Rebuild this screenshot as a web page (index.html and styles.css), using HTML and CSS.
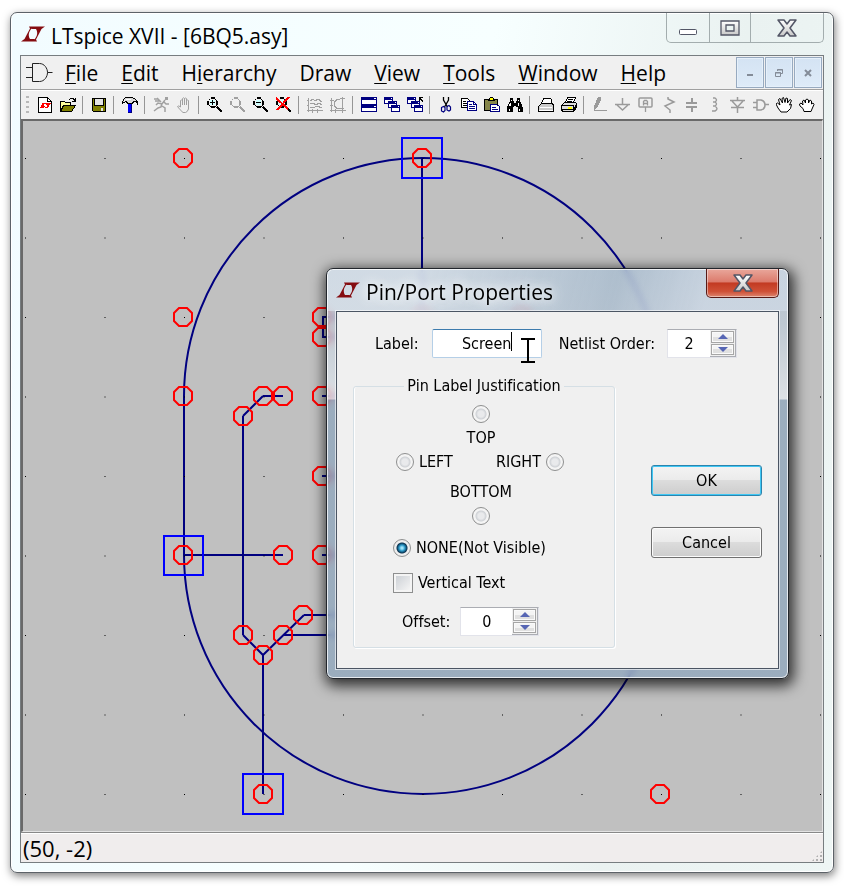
FILE: index.html
```html
<!DOCTYPE html>
<html lang="en">
<head>
<meta charset="utf-8">
<title>LTspice XVII - [6BQ5.asy]</title>
<link rel="stylesheet" href="styles.css">
</head>
<body>
<svg class="defs" aria-hidden="true">
  <defs>
    <linearGradient id="metal" x1="0" y1="0" x2="0" y2="1"><stop offset="0" stop-color="#fff"/><stop offset="1" stop-color="#c8c8c8"/></linearGradient>
    <symbol id="logo" viewBox="0 0 24 16"><path fill="#850c10" d="M0 15.500L3.500 13 9 2.500 8 .500h5C8 4 6.500 9 9 13h4.500l-2 2.500zM24 .500L20.500 3 15 13.500l1 2h-5C16 12 17.500 7 15 3h-4.500l2-2.500z"/></symbol>
    <symbol id="cross" viewBox="0 0 20 18"><path d="M1 1h6l3 4 3-4h6l-6 8 6 8h-6l-3-4-3 4H1l6-8z" fill="url(#metal)" stroke="#535666" stroke-width="1.5" stroke-linejoin="round"/></symbol>
    <symbol id="lens" viewBox="0 0 16 16"><path d="M4 1h4M4 10h4M1 4v4M10 4v4M2 3l1-1M8 2l2 2M2 8l2 2M8 10l2-2" fill="none" stroke="currentColor" stroke-width="1.3"/><path d="M10 10l5 5" stroke="currentColor" stroke-width="2.4"/></symbol>
    <symbol id="pane" viewBox="0 0 16 16"><path fill="#000080" d="M0 0h9v7H0zM4 4h9v7H4zM7 8h9v7H7z"/><path fill="#fff" d="M1 3h7v1H4v2H1zM5 7h7v1H7v2H5zM8 11h7v3H8zM7 1h1v1H7zM11 5h1v1h-1zM14 9h1v1h-1z"/></symbol>
    <symbol id="node" viewBox="-11 -11 22 22" overflow="visible"><path d="M-4-9h8l5 5v8l-5 5h-8l-5-5v-8z" fill="none" stroke="#f00" stroke-width="2"/></symbol>
    <pattern id="grid" x="25" y="158" width="79.5" height="79.5" patternUnits="userSpaceOnUse"><rect width="1" height="1" fill="#000"/></pattern>
  </defs>
</svg>

<main class="window">
  <header class="titlebar">
    <svg class="logo"><use href="#logo"/></svg>
    <h1>LTspice XVII - [6BQ5.asy]</h1>
    <div class="caption-buttons">
      <button class="cap cap-min" aria-label="Minimize"><svg width="18" height="6"><rect x=".5" y=".5" width="17" height="5" rx="1" fill="#fff" stroke="#535666"/></svg></button>
      <button class="cap" aria-label="Maximize"><svg width="20" height="16"><path d="M1 1h18v14H1zM6 5v6h8V5z" fill="url(#metal)" fill-rule="evenodd" stroke="#535666" stroke-width="1.3"/></svg></button>
      <button class="cap cap-wide" aria-label="Close"><svg width="20" height="18"><use href="#cross"/></svg></button>
    </div>
  </header>

  <div class="client">
    <nav class="menubar">
      <svg class="gate" viewBox="0 0 27 20" fill="none" stroke="#222"><path d="M6.500 .5h7c5 0 8 5 8 9s-3 9-8 9h-7zM0 4.500h6M0 14.500h6M21.500 9.500h5"/></svg>
      <a href="#file"><u>F</u>ile</a>
      <a href="#edit"><u>E</u>dit</a>
      <a href="#hierarchy">H<u>i</u>erarchy</a>
      <a href="#draw">Draw</a>
      <a href="#view"><u>V</u>iew</a>
      <a href="#tools"><u>T</u>ools</a>
      <a href="#window"><u>W</u>indow</a>
      <a href="#help"><u>H</u>elp</a>
      <div class="mdi-buttons">
        <button aria-label="Minimize document"><svg width="10" height="10"><path d="M2 7h6" stroke="#848c98" stroke-width="2"/></svg></button>
        <button aria-label="Restore document"><svg width="10" height="10" fill="none" stroke="#848c98"><path d="M3.500 3V1.500h5v4H7M3 2h6M1.500 4.500h5v4h-5zM1 5h6"/></svg></button>
        <button aria-label="Close document"><svg width="10" height="10"><path d="M2 2l6 6M8 2l-6 6" stroke="#848c98" stroke-width="2"/></svg></button>
      </div>
    </nav>

    <div class="toolbar" role="toolbar" aria-label="Main toolbar">
      <span class="grip"></span>
      <button aria-label="New schematic"><svg viewBox="0 0 16 16"><path d="M1.500 .5h9l4 4v11h-13z" fill="#fff" stroke="#000"/><path d="M10.500 1v3.500H14" fill="none" stroke="#000"/><path fill="#f00" d="M2 11h1v-1h1V8h1V6h3v1H7v2h1v1H7v1zM8 6h6v1h-1v1h-1v2h-1v1H8v-1h2V8H9V7H8z"/></svg></button>
      <button aria-label="Open"><svg viewBox="0 0 16 16"><path d="M.5 13.500v-9h4l1 1h5v3" fill="#ffff9a" stroke="#000"/><path d="M.5 14.500l3-6h12l-4 6z" fill="#808000" stroke="#000"/><path d="M9 2.500l2-1h2l2 2M15.500 1v3H12" fill="none" stroke="#000"/></svg></button>
      <span class="sep"></span>
      <button aria-label="Save"><svg viewBox="0 0 16 16"><path d="M1 1h14v14H2l-1-1z" fill="#000"/><path d="M2 2h1v7h10V2h1v12H2z" fill="#808000"/><path d="M4 2h8v6H4zM10 11h2v3h-2z" fill="#e4e4e4"/></svg></button>
      <span class="sep"></span>
      <button aria-label="Control panel"><svg viewBox="0 0 16 16"><path fill="#000" d="M3 0h8v1h2v1h1v1h1v1h1v4h-1V6h-1V5h-2v1h-1v1H5V6H4V5H3v1H1v1H0V4h1V2h1V1h1z"/><path fill="#d8d8d8" d="M3 1h8v1h2v1h1v1h-3v1h-1v1H6V5H5V4H3v1H1V4h1V2h1z"/><path fill="#fff" d="M4 2h5v1H3v1H2V3h2z"/><path d="M6 7h4v9H6z" fill="#00f"/><path d="M9 7h1v9H6v-1h3z" fill="#000080"/></svg></button>
      <span class="sep"></span>
      <button class="off" aria-label="Run"><svg class="smooth" viewBox="0 0 16 16"><path d="M12 0h3v3h-3z" fill="#a0a0a0"/><path d="M12 3L9 7 5 6 3 8M9 6l-1 4-3 1-4 3M9 9l3 2v4M11 5l2 2h3M1 2h4M2 4h5M4 1l4 4" fill="none" stroke="#a0a0a0" stroke-width="1.500"/></svg></button>
      <button class="off" aria-label="Halt"><svg class="smooth" viewBox="0 0 16 16"><path d="M4.500 10V3.500q1-1 2 0V8 1.500q1-1.500 2 0V8 1.500q1-1 2 0V8 3.500q1-1 2 0V12q-1 3-3 3.500H7Q4 13 1.500 9.500q1-1.500 3 .5" fill="none" stroke="#a0a0a0"/></svg></button>
      <span class="sep"></span>
      <button aria-label="Zoom in"><svg viewBox="0 0 16 16"><path d="M3 3h5v5H3z" fill="#cff"/><use href="#lens"/><path d="M3 5.500h5M5.500 3v5" stroke="#000"/></svg></button>
      <button class="off" aria-label="Pan"><svg viewBox="0 0 16 16"><use href="#lens"/></svg></button>
      <button aria-label="Zoom out"><svg viewBox="0 0 16 16"><path d="M3 3h5v5H3z" fill="#cff"/><use href="#lens"/><path d="M3 5.500h5" stroke="#000"/></svg></button>
      <button aria-label="Zoom to fit"><svg viewBox="0 0 16 16"><path d="M3 3h5v5H3z" fill="#cff"/><use href="#lens"/><path d="M0 1l12 11M13 0L1 13" stroke="#f00" stroke-width="2"/></svg></button>
      <span class="sep"></span>
      <button class="off" aria-label="Autorange"><svg viewBox="0 0 16 16"><path d="M1.500 1v14M0 13.500h16M0 3.500h2M0 8.500h2M5.500 12v4M10.500 12v4M3 4l3-2 2 2 3-2 4 3M3 7l3-1 3 2 3-2 3 2M3 10h5l2-1 5 2" fill="none" stroke="#a0a0a0"/></svg></button>
      <button class="off" aria-label="Plot settings"><svg viewBox="0 0 16 16"><path d="M1.500 1v14M0 13.500h16M0 3.500h4M0 8.500h3M5.500 12v4M12.500 0v16M10 2.500H7L4.500 5v4L7 11.500h7M10 1.500h5" fill="none" stroke="#a0a0a0"/></svg></button>
      <span class="sep"></span>
      <button aria-label="Tile windows"><svg viewBox="0 0 16 16"><path fill="#000080" d="M0 0h16v15H0z"/><path fill="#fff" d="M1 3h14v4H1zM1 11h14v3H1zM13 1h2v1h-2zM13 9h2v1h-2z"/></svg></button>
      <button aria-label="Cascade windows"><svg viewBox="0 0 16 16"><use href="#pane"/></svg></button>
      <button aria-label="Close windows"><svg viewBox="0 0 16 16"><use href="#pane"/><path d="M12.500 4V.5H16M13 1l3 4" fill="none" stroke="#000"/></svg></button>
      <span class="sep"></span>
      <button aria-label="Cut"><svg class="smooth" viewBox="0 0 16 16"><path d="M5.500 0v3l4 7M10.500 0v3l-4 7" fill="none" stroke="#000" stroke-width="1.300"/><path d="M3.500 10.500l2-1 1.500 1v3l-1.500 1.500-2-1zM9 9.500l2-1 1.500 1.500v3l-1.500 1-2-1z" fill="none" stroke="#000080" stroke-width="1.200"/></svg></button>
      <button aria-label="Copy"><svg viewBox="0 0 16 16"><path d="M.5 1.500h6l2 2v7h-8z" fill="#fff" stroke="#000"/><path d="M2 4.500h3M2 6.500h4M2 8.500h4" stroke="#000"/><path d="M6.500 4.500h6l3 3v6h-9z" fill="#fff" stroke="#000080"/><path d="M12.500 5v2.500H15M8 7.500h3M8 9.500h6M8 11.500h6" fill="none" stroke="#000080"/></svg></button>
      <button aria-label="Paste"><svg viewBox="0 0 16 16"><path d="M.5 2.500h13v11H.5z" fill="#86864a" stroke="#000"/><path d="M4.500 3.500l1-2 1-1h2l1 1 1 2z" fill="#ff0" stroke="#000"/><path d="M6.500 7.500h6l3 2v5h-9z" fill="#fff" stroke="#000080"/><path d="M8 10.500h4M8 12.500h6" stroke="#000080"/></svg></button>
      <button aria-label="Find"><svg viewBox="0 0 16 16"><path d="M3 1h3v3h1v2h2V4h1V1h3v3l2 4 1 3v4h-5v-5H9V9H7v1H6v5H0v-4l1-3 2-4z" fill="#000"/><path d="M4 3h1v1H4zM3 6h1v3H2zM11 3h1v1h-1zM11 6h1v3h-1zM2 12h1v2H2zM12 12h1v2h-1z" fill="#fff"/></svg></button>
      <span class="sep"></span>
      <button aria-label="Print preview"><svg viewBox="0 0 16 16"><path d="M3.500 6.500l2-5h7l1 1v4" fill="#fff" stroke="#000"/><path d="M.5 9.500l3-3h11l1 2v6H.5z" fill="#ccc" stroke="#000"/><path d="M1 13h14M2 10h12" stroke="#fff"/></svg></button>
      <button aria-label="Print"><svg viewBox="0 0 16 16"><path d="M4.500 5.500l2-5h8l-2 5" fill="#fff" stroke="#000"/><path d="M7 2.500h5M6 4.500h5" stroke="#000"/><path d="M.5 8.500l3-3h11l1 1v4l-3 4h-11l-1-2z" fill="#ddd" stroke="#000"/><path d="M1 8.500h11M1 12.500h11M12.500 8v6l3-7" fill="none" stroke="#000"/><path d="M7 10h4v2H7z" fill="#ff0"/></svg></button>
      <span class="sep"></span>
      <button class="off" aria-label="Wire"><svg viewBox="0 0 16 16"><path d="M6 0h3v3L5 11l-3 2v-4z" fill="#9a9a9a"/><path d="M2 13.500h13" stroke="#9a9a9a"/></svg></button>
      <button class="off" aria-label="Ground"><svg class="smooth" viewBox="0 0 16 16"><path d="M7.500 1v6M0 7.500h15M2 8l5.500 5L13 8" fill="none" stroke="#9a9a9a" stroke-width="1.500"/></svg></button>
      <button class="off" aria-label="Label net"><svg class="smooth" viewBox="0 0 16 16"><rect x="1" y="1" width="13" height="9" rx="1" fill="none" stroke="#9a9a9a" stroke-width="1.500"/><path d="M7.500 10v5M5.500 8.500v-4l1-1h2l1 1v4M5.500 6.500h4" fill="none" stroke="#9a9a9a" stroke-width="1.300"/></svg></button>
      <button class="off" aria-label="Resistor"><svg class="smooth" viewBox="0 0 16 16"><path d="M7 0v2l6 3-9 4 5 4v3" fill="none" stroke="#9a9a9a" stroke-width="1.500"/></svg></button>
      <button class="off" aria-label="Capacitor"><svg viewBox="0 0 16 16"><path d="M8 1v5M8 10v5M2 6h11M2 10h11" stroke="#9a9a9a" stroke-width="2"/></svg></button>
      <button class="off" aria-label="Inductor"><svg class="smooth" viewBox="0 0 16 16"><path d="M6 1h2q3 2 0 4H6h2q3 2 0 4H6h2q4 3 0 5H5" fill="none" stroke="#9a9a9a" stroke-width="1.400"/></svg></button>
      <button class="off" aria-label="Diode"><svg class="smooth" viewBox="0 0 16 16"><path d="M7.500 0v4M7.500 10v6M0 3.500h15M2 4l5.500 6L13 4M1 10.500h13" fill="none" stroke="#9a9a9a" stroke-width="1.500"/></svg></button>
      <button class="off" aria-label="Component"><svg class="smooth" viewBox="0 0 16 16"><path d="M4 3h4q4 1 4 5t-4 5H4zM0 5.500h4M0 10.500h4M12 7.500h4" fill="none" stroke="#9a9a9a" stroke-width="1.500"/></svg></button>
      <button aria-label="Move"><svg class="smooth" viewBox="0 0 16 16"><path d="M5 15l-3-4-2-4 1.500-1L4 8 2.500 2.500 4 1.500 6.500 6 6 1.500 7.500.5 9 5.500 10 1l1.500.5V6L14 2.500l1.500 1-2 4.500 2-.5-1 4L11 15z" fill="#fff" stroke="#000"/></svg></button>
      <button aria-label="Drag"><svg class="smooth" viewBox="0 0 16 16"><path d="M5 14.500l-1-3-3-2.500-.5-2L2 6l2 2-.5-4L5 3l1.500 3V3L8 2l1.500 1v3L11 3l1.500 1v3L14 6l1 1.500L13 12l-1 2.500z" fill="#fff" stroke="#000"/></svg></button>
    </div>

    <section class="canvas" aria-label="Symbol editor">
      <svg class="drawing">
        <g transform="translate(-23 -121)" fill="none" shape-rendering="crispEdges">
          <g stroke="#000080" stroke-width="2">
            <path d="M184 396a239 238 0 0 1 478 0v159a239 239 0 0 1-478 0z" shape-rendering="auto"/>
            <path d="M422 158v159h100M184 555h99M283 396h-20M243 416v219M263 655v139M283 635h240M304 615h220M340 317h-17v20h17M322 396h200M322 476h200M322 555h200"/>
            <path d="M263 396l-20 20M243 635l20 20 41-40" shape-rendering="auto"/>
          </g>
          <rect x="20" y="150" width="802" height="650" fill="url(#grid)"/>
          <g stroke="#00f" stroke-width="2"><path d="M402 138h40v40h-40zM164 536h39v39h-39zM243 774h40v40h-40z"/></g>
          <g shape-rendering="auto">
            <use href="#node" x="172" y="147" width="22" height="22"/><use href="#node" x="411" y="147" width="22" height="22"/>
            <use href="#node" x="172" y="306" width="22" height="22"/><use href="#node" x="172" y="385" width="22" height="22"/>
            <use href="#node" x="252" y="385" width="22" height="22"/><use href="#node" x="272" y="385" width="22" height="22"/>
            <use href="#node" x="232" y="405" width="22" height="22"/><use href="#node" x="311" y="385" width="22" height="22"/>
            <use href="#node" x="311" y="306" width="22" height="22"/><use href="#node" x="311" y="326" width="22" height="22"/>
            <use href="#node" x="311" y="465" width="22" height="22"/><use href="#node" x="172" y="544" width="22" height="22"/>
            <use href="#node" x="272" y="544" width="22" height="22"/><use href="#node" x="311" y="544" width="22" height="22"/>
            <use href="#node" x="292" y="604" width="22" height="22"/><use href="#node" x="272" y="624" width="22" height="22"/>
            <use href="#node" x="232" y="624" width="22" height="22"/><use href="#node" x="252" y="644" width="22" height="22"/>
            <use href="#node" x="252" y="783" width="22" height="22"/><use href="#node" x="649" y="783" width="22" height="22"/>
            <use href="#node" x="411" y="306" width="22" height="22"/><use href="#node" x="511" y="306" width="22" height="22"/>
          </g>
        </g>
      </svg>

      <form class="dialog" role="dialog" aria-labelledby="dialog-title" onsubmit="return false">
        <header class="dialog-title">
          <svg class="logo"><use href="#logo"/></svg>
          <h2 id="dialog-title">Pin/Port Properties</h2>
          <button type="button" class="close" aria-label="Close dialog"><svg width="20" height="18"><use href="#cross"/></svg></button>
        </header>
        <div class="dialog-body">
          <div class="row names">
            <label for="label">Label:</label>
            <span class="textbox">
              <input id="label" type="text" value="Screen">
              <svg class="ibeam" width="34" height="34" stroke="#000"><path d="M1.500 1v19"/><path d="M11 8h14M11 31h14M18 8v23" stroke-width="2"/></svg>
            </span>
            <label class="netlist" for="order">Netlist Order:</label>
            <span class="spinner">
              <input id="order" type="number" value="2">
              <span class="arrows"><button type="button" class="up" aria-label="Increase order"></button><button type="button" class="down" aria-label="Decrease order"></button></span>
            </span>
          </div>
          <div class="columns">
            <fieldset>
              <legend>Pin Label Justification</legend>
              <label class="stack top"><input type="radio" name="just">TOP</label>
              <div class="sides">
                <label><input type="radio" name="just">LEFT</label>
                <label>RIGHT<input type="radio" name="just"></label>
              </div>
              <label class="stack bottom">BOTTOM<input type="radio" name="just"></label>
              <label class="option"><input type="radio" name="just" checked>NONE(Not Visible)</label>
              <label class="option"><input type="checkbox">Vertical Text</label>
              <div class="offset">
                <label for="offset">Offset:</label>
                <span class="spinner wide">
                  <input id="offset" type="number" value="0">
                  <span class="arrows"><button type="button" class="up" aria-label="Increase offset"></button><button type="button" class="down" aria-label="Decrease offset"></button></span>
                </span>
              </div>
            </fieldset>
            <div class="actions">
              <button type="submit" class="push default">OK</button>
              <button type="button" class="push">Cancel</button>
            </div>
          </div>
        </div>
      </form>
    </section>

    <footer class="status"><span>(50, -2)</span><i class="sizer"></i></footer>
  </div>
</main>
</body>
</html>
```
FILE: styles.css
```css
* { box-sizing: border-box; }

body {
  margin: 0;
  height: 100vh;
  padding: 12px 10px 14px;
  background: #fff;
  color: #000;
  font-family: "Open Sans", "Noto Sans", sans-serif;
  font-variant-ligatures: none;
}

button, input { font: inherit; color: inherit; margin: 0; padding: 0; }
button { display: flex; align-items: center; justify-content: center; border: 0; background: none; }
svg { display: block; flex: none; }
.defs { position: absolute; width: 0; height: 0; }

.window {
  display: flex;
  flex-direction: column;
  height: 100%;
  padding: 0 9px 9px;
  border: 1px solid #5c6268;
  border-radius: 7px;
  background: linear-gradient(100deg, #f2fcff 0, #f7ffff 50%, #eaf2f1 76%, #eef6f5 100%);
  box-shadow: 1px 3px 8px rgba(0, 0, 0, .5), inset 0 0 0 1px #fff;
}

.titlebar { display: flex; height: 42px; flex: none; }
.logo { width: 24px; height: 16px; }
.titlebar .logo { margin: 13px 6px 0 1px; }
h1, h2 { margin: 0; font-weight: 400; font-size: 21px; line-height: 28px; white-space: nowrap; }
h1 { margin-top: 9px; }

.caption-buttons {
  display: flex;
  height: 30px;
  margin-left: auto;
  border: 1px solid #a3adae;
  border-top: 0;
  border-radius: 0 0 5px 5px;
}
.cap { width: 41px; border-right: 1px solid #a3adae; }
.cap-min { width: 43px; }
.cap-min svg { margin-top: 8px; }
.cap-wide { width: 72px; border: 0; }

.client {
  display: flex;
  flex-direction: column;
  flex: 1;
  min-height: 0;
  border: 1px solid #777d80;
  background: #f0f0f0;
}

.menubar {
  display: flex;
  align-items: center;
  gap: 23px;
  height: 34px;
  flex: none;
  padding: 0 1px 0 5px;
  border-bottom: 1px solid #a0a0a0;
}
.menubar a { color: #000; font-size: 21px; line-height: 30px; text-decoration: none; }
.menubar u { text-decoration: underline solid #000 1px; text-underline-offset: 2px; text-decoration-skip-ink: none; }
.gate { width: 27px; height: 20px; margin-right: -11px; }
.mdi-buttons { display: flex; gap: 1px; margin-left: auto; }
.mdi-buttons button {
  width: 28px;
  height: 31px;
  border: 1px solid #97aac0;
  background: linear-gradient(#d4e3f3, #deebf8);
  box-shadow: inset 0 0 0 1px #e6f0fa;
}

.toolbar {
  display: flex;
  align-items: center;
  height: 29px;
  flex: none;
  padding-left: 5px;
  border-top: 1px solid #fff;
}
.toolbar button { width: 23px; height: 24px; color: #000; }
.toolbar button.off { color: #a0a0a0; }
.toolbar svg { width: 16px; height: 16px; shape-rendering: crispEdges; }
.toolbar .smooth { shape-rendering: auto; }
.grip {
  width: 3px;
  height: 19px;
  margin-right: 4px;
  background: repeating-linear-gradient(#b8b8b8 0 2px, transparent 2px 5px);
}
.sep { width: 8px; height: 18px; background: linear-gradient(#969696, #969696) 3px 0 / 1px 100% no-repeat; }

.canvas {
  position: relative;
  flex: 1;
  min-height: 0;
  border: 2px solid #696969;
  border-width: 2px 1px 1px 2px;
  border-right-color: #e3e3e3;
  border-bottom-color: #e3e3e3;
  background: #c0c0c0;
}
.drawing { width: 100%; height: 100%; }

.status {
  display: flex;
  align-items: center;
  justify-content: space-between;
  height: 30px;
  flex: none;
  padding-left: 2px;
  border-top: 1px solid #888;
  background: #f0eded;
  box-shadow: inset 0 1px #fff;
  font-size: 22px;
  line-height: 28px;
}
.sizer {
  align-self: flex-end;
  width: 12px;
  height: 12px;
  background: radial-gradient(#b0b0b0 1px, transparent 1px) 0 0 / 4px 4px;
  clip-path: polygon(100% 0, 100% 100%, 0 100%);
}

.dialog {
  position: absolute;
  left: 303px;
  top: 147px;
  width: 463px;
  padding: 0 9px 9px;
  border: 1px solid #22262c;
  border-radius: 7px;
  background:
    linear-gradient(105deg, rgba(225, 233, 241, .6) 0 20%, rgba(150, 175, 198, .3) 62%, rgba(215, 225, 238, .5) 82%) 0 0 / 100% 42px no-repeat,
    linear-gradient(rgba(180, 198, 215, .7) 0, rgba(190, 204, 218, .7) 55px, rgba(232, 238, 244, .7) 130px, rgba(143, 167, 190, .75) 131px);
  backdrop-filter: blur(3px);
  box-shadow: 2px 4px 14px 3px rgba(0, 0, 0, .75), inset 0 0 0 1px rgba(255, 255, 255, .75);
  font-family: "DejaVu Sans Condensed", "Noto Sans", sans-serif;
  font-size: 16px;
  line-height: 20px;
}
.dialog-title { display: flex; height: 42px; }
.dialog-title .logo { margin: 13px 6px 0 0; }
.dialog-title h2 {
  margin-top: 9px;
  font-family: "Open Sans", "Noto Sans", sans-serif;
  text-shadow: 0 0 10px #fff, 0 0 14px #fff;
}
.close {
  width: 73px;
  height: 29px;
  margin-left: auto;
  border: 1px solid #571a16;
  border-top: 0;
  border-radius: 0 0 5px 5px;
  background: linear-gradient(#e9a79b, #dc7b6c 46%, #c23a22 50%, #cf5036 80%, #dd8670);
  box-shadow: inset 0 0 0 1px rgba(255, 255, 255, .45);
}

.dialog-body {
  padding: 17px 16px 20px;
  border: 1px solid #4b5563;
  background: #f0f0f0;
  box-shadow: 0 0 0 1px rgba(255, 255, 255, .6);
}
.row { display: flex; align-items: center; }
.names { padding-left: 22px; }
.textbox { position: relative; width: 110px; margin-left: 13px; }
.textbox input {
  display: block;
  width: 100%;
  height: 29px;
  border: 1px solid #b5cfe7;
  border-top-color: #3d7bad;
  border-radius: 2px;
  background: #fff;
  text-align: center;
}
.ibeam { position: absolute; left: 78px; top: 2px; }
.netlist { margin-left: 17px; }

.spinner {
  display: flex;
  width: 70px;
  height: 29px;
  margin-left: 12px;
  border: 1px solid #e2e3ea;
  border-top-color: #abadb3;
  background: #fff;
}
.spinner.wide { width: 79px; margin-left: 10px; }
.spinner input {
  flex: 1;
  min-width: 0;
  border: 0;
  background: none;
  text-align: center;
  appearance: textfield;
}
.spinner input::-webkit-inner-spin-button { display: none; }
.arrows { display: flex; flex-direction: column; gap: 1px; width: 26px; padding: 1px; background: #f0f0f0; border-right: 1px solid #abadb3; border-bottom: 1px solid #abadb3; }
.arrows button {
  flex: 1;
  border: 1px solid #a6a6a6;
  background: linear-gradient(#f4f4f4 50%, #e0e0e0 50%);
  box-shadow: inset 0 0 0 1px #fafafa;
}
.arrows button::before { content: ""; border: 5px solid transparent; }
.arrows .up::before { border-top: 0; border-bottom-color: #5766b4; }
.arrows .down::before { border-bottom: 0; border-top-color: #5766b4; }

.columns { display: flex; align-items: flex-start; margin-top: 18px; }
fieldset {
  display: flex;
  flex-direction: column;
  width: 262px;
  min-width: 0;
  margin: 0;
  padding: 9px 0 11px;
  border: 1px solid #d5dfe5;
  border-radius: 3px;
  box-shadow: 1px 1px #fff, inset 1px 0 #fff;
}
legend { margin: 0 auto; padding: 0 3px; }
fieldset input {
  appearance: none;
  flex: none;
  width: 18px;
  height: 18px;
  border: 1px solid #8e8f8f;
  background: radial-gradient(#e9eaec 0 3px, #cfd2d6 5px, #f4f4f4 6px);
}
fieldset input[type="radio"] { border-radius: 50%; }
fieldset .spinner input { flex: 1; width: auto; height: auto; border: 0; background: none; appearance: textfield; }
fieldset input[type="radio"]:checked {
  background: radial-gradient(circle, #9fe3fa 0 1px, #2795c4 3px, #0b3350 5px, #eee 6px);
}
fieldset input[type="checkbox"] {
  width: 20px;
  height: 20px;
  background: linear-gradient(135deg, #cdd1d6, #f4f4f4) content-box, #f4f4f4;
  padding: 2px;
}
.stack { display: flex; flex-direction: column; align-items: center; width: 254px; gap: 5px; }
.sides { display: flex; gap: 43px; padding-left: 42px; margin-top: 4px; }
.sides label { display: flex; align-items: center; gap: 5px; }
.bottom { margin-top: 10px; }
.option { display: flex; align-items: center; gap: 5px; height: 20px; padding-left: 39px; margin-top: 13px; }
.option + .option { margin-top: 15px; }
.offset { display: flex; align-items: center; margin-top: 14px; padding-left: 48px; }

.actions { display: flex; flex-direction: column; gap: 31px; flex: 1; margin: 89px 0 0 36px; }
.push {
  height: 31px;
  border: 1px solid #707070;
  border-radius: 3px;
  background: linear-gradient(#f3f3f3, #ebebeb 48%, #dcdcdc 50%, #cdcdcd);
  box-shadow: inset 0 0 0 1px #fbfbfb;
}
.push.default { border-color: #2c84ad; box-shadow: inset 0 0 0 1px #3fc7f4; }
```
